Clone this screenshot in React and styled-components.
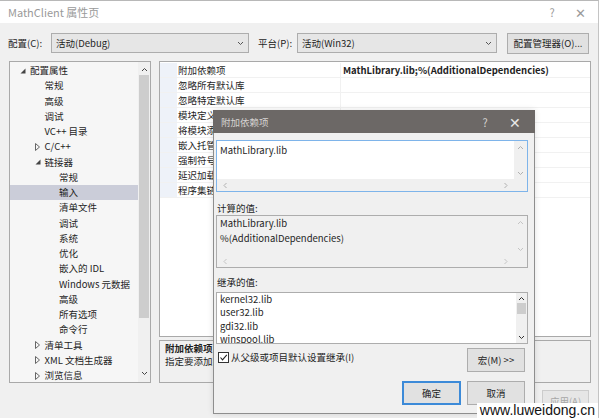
import React from 'react'
import styled, { createGlobalStyle } from 'styled-components'

const Global = createGlobalStyle`
  html, body { margin: 0; padding: 0; background: #fff; }
  body {
    font-family: "Segoe UI", "Noto Sans CJK SC", sans-serif;
    font-size: 9.5px;
    color: #1e1e1e;
  }
  * { box-sizing: border-box; }
`

const Window = styled.div`
  position: relative;
  width: 599px;
  height: 418px;
  overflow: hidden;
  background: #f0f0f0;
  border-top: 1px solid #b8b8b8;
  border-right: 1px solid #c4c4c4;
  display: flex;
  flex-direction: column;
`

const TitleBar = styled.div`
  height: 22px;
  background: #fff;
  display: flex;
  align-items: center;
  padding-left: 8px;
  color: #9a9a9a;
  font-size: 11px;
`

const TitleText = styled.div`
  flex: 1;
`

const TitleCtl = styled.div`
  width: ${p => p.w}px;
  text-align: center;
  color: ${p => p.color || '#9a9a9a'};
  font-size: ${p => p.size || 11}px;
`

const ConfigRow = styled.div`
  display: flex;
  align-items: center;
  padding: 9px 0 0 8px;
  height: 31px;
`

const Label = styled.div`
  width: ${p => p.w}px;
  flex: none;
`

const Combo = styled.div`
  width: ${p => p.w}px;
  height: 20px;
  flex: none;
  background: #e6e6e6;
  border: 1px solid #adadad;
  display: flex;
  align-items: center;
  justify-content: space-between;
  padding: 0 4px 0 4px;
`

const Button = styled.div`
  width: ${p => p.w}px;
  height: ${p => p.h || 21}px;
  flex: none;
  display: flex;
  align-items: center;
  justify-content: center;
  background: ${p => (p.disabled ? '#e6e6e6' : '#e1e1e1')};
  border: ${p => (p.primary ? '2px solid #3c8ad8' : p.disabled ? '1px solid #cccccc' : '1px solid #adadad')};
  color: ${p => (p.disabled ? '#a6a6a6' : '#1e1e1e')};
  margin-left: ${p => p.ml || 0}px;
`

const Body = styled.div`
  display: flex;
  gap: 8px;
  padding-left: 9px;
  margin-top: 7px;
  height: 322px;
`

const Tree = styled.div`
  width: 142px;
  border: 1px solid #a9a9a9;
  background: #f6f6f6;
  display: flex;
  position: relative;
`

const TreeList = styled.div`
  flex: 1;
  padding-top: 1px;
`

const TreeItem = styled.div`
  height: 15.25px;
  line-height: 15.25px;
  display: flex;
  align-items: center;
  padding-left: ${p => p.indent}px;
  background: ${p => (p.selected ? '#cbcdd9' : 'transparent')};
  white-space: nowrap;
`

const Twist = styled.span`
  width: 10px;
  flex: none;
  display: flex;
  align-items: center;
`

const VScroll = styled.div`
  width: ${p => p.w || 12}px;
  flex: none;
  background: ${p => p.bg || '#f0f0f0'};
  display: flex;
  flex-direction: column;
  align-items: center;
  justify-content: space-between;
  padding: ${p => p.pad || '4px 0'};
`

const Thumb = styled.div`
  width: ${p => p.w}px;
  height: ${p => p.h}px;
  background: #cdcdcd;
  margin-top: ${p => p.mt || 0}px;
`

const ScrollCol = styled.div`
  display: flex;
  flex-direction: column;
  align-items: center;
  flex: 1;
`

const RightCol = styled.div`
  width: 432px;
  display: flex;
  flex-direction: column;
  gap: 3px;
`

const Grid = styled.div`
  height: 276px;
  border: 1px solid #a9a9a9;
  background: #fff;
  padding-top: 1px;
`

const GridRow = styled.div`
  height: 15px;
  display: flex;
  align-items: center;
  border-bottom: 1px solid #f1f1f1;
`

const GridStrip = styled.div`
  width: 17px;
  height: 100%;
  background: #eef2f9;
  flex: none;
`

const GridName = styled.div`
  width: 164px;
  padding-left: 1px;
  flex: none;
  white-space: nowrap;
  overflow: hidden;
  height: 100%;
  display: flex;
  align-items: center;
  border-right: 1px solid #f1f1f1;
`

const GridValue = styled.div`
  padding-left: 2px;
  font-weight: 700;
  white-space: nowrap;
`

const Desc = styled.div`
  height: 43px;
  border: 1px solid #a9a9a9;
  background: #f0f0f0;
  padding: 1px 5px;
  line-height: 13px;
`

const DescTitle = styled.div`
  font-weight: 700;
`

const BottomRow = styled.div`
  display: flex;
  justify-content: flex-end;
  gap: 10px;
  padding-right: 9px;
  margin-top: 7px;
`

/* dialog */
const Dialog = styled.div`
  position: absolute;
  left: 213px;
  top: 109px;
  width: 322px;
  height: 304px;
  background: #f0f0f0;
  border: 1px solid #8e8e8e;
  border-top: none;
  display: flex;
  flex-direction: column;
  box-shadow: 0 0 6px rgba(0, 0, 0, 0.12);
`

const DlgTitle = styled.div`
  height: 23px;
  background: #6c6866;
  color: #d6d4d2;
  display: flex;
  align-items: center;
  padding-left: 8px;
  margin: 0 -1px;
`

const DlgBody = styled.div`
  padding: 7px 6px 0 2px;
  display: flex;
  flex-direction: column;
`

const Box = styled.div`
  height: ${p => p.h}px;
  border: 1px solid ${p => p.border || '#adadad'};
  background: ${p => p.bg || '#fff'};
  display: flex;
  flex-direction: column;
`

const BoxMain = styled.div`
  flex: 1;
  display: flex;
  min-height: 0;
`

const BoxText = styled.div`
  flex: 1;
  padding: ${p => p.pad || '1px 3px'};
  line-height: ${p => p.lh || 15}px;
  overflow: hidden;
  white-space: nowrap;
`

const HScroll = styled.div`
  height: 12px;
  display: flex;
`

const HTrack = styled.div`
  flex: 1;
  background: ${p => p.bg || '#f0f0f0'};
  display: flex;
  align-items: center;
  justify-content: space-between;
  padding: 0 5px;
`

const Corner = styled.div`
  width: 13px;
  background: ${p => p.bg || '#f0f0f0'};
`

const FieldLabel = styled.div`
  height: ${p => p.h}px;
  display: flex;
  align-items: center;
  padding-left: 1px;
`

const CheckRow = styled.div`
  display: flex;
  justify-content: space-between;
  margin-top: 4px;
  height: 24px;
  padding-right: 3px;
`

const CheckLabel = styled.label`
  display: flex;
  align-items: center;
  gap: 2px;
  height: 18px;
  padding-left: 2px;
`

const CheckBox = styled.span`
  width: 11px;
  height: 11px;
  border: 1px solid #333;
  background: #fff;
  display: flex;
  align-items: center;
  justify-content: center;
`

const DlgButtons = styled.div`
  display: flex;
  justify-content: flex-end;
  gap: 6px;
  margin-top: 9px;
  padding-right: 3px;
`

const Watermark = styled.div`
  position: absolute;
  right: 0;
  bottom: 0;
  background: #fff;
  color: #111;
  font-family: "Liberation Sans", Arial, sans-serif;
  font-size: 14px;
  line-height: 15px;
  padding: 0 3px 0 3px;
`

const Chevron = ({ dir = 'down', color = '#555', size = 7 }) => {
  const pts = {
    down: '1,2 3.5,4.5 6,2',
    up: '1,5 3.5,2.5 6,5',
    left: '4.5,1 2,3.5 4.5,6',
    right: '2.5,1 5,3.5 2.5,6',
  }[dir]
  return (
    <svg width={size} height={size} viewBox="0 0 7 7">
      <polyline points={pts} fill="none" stroke={color} strokeWidth="1" />
    </svg>
  )
}

const Expanded = () => (
  <svg width="6" height="6" viewBox="0 0 6 6">
    <polygon points="5.5,0.5 5.5,5.5 0.5,5.5" fill="#444" />
  </svg>
)

const Collapsed = () => (
  <svg width="6" height="8" viewBox="0 0 6 8">
    <polygon points="0.5,0.5 4.5,4 0.5,7.5" fill="none" stroke="#666" strokeWidth="1" />
  </svg>
)

const treeItems = [
  { t: '配置属性', l: 1, tw: 'open' },
  { t: '常规', l: 2 },
  { t: '高级', l: 2 },
  { t: '调试', l: 2 },
  { t: 'VC++ 目录', l: 2 },
  { t: 'C/C++', l: 2, tw: 'closed' },
  { t: '链接器', l: 2, tw: 'open' },
  { t: '常规', l: 3 },
  { t: '输入', l: 3, sel: true },
  { t: '清单文件', l: 3 },
  { t: '调试', l: 3 },
  { t: '系统', l: 3 },
  { t: '优化', l: 3 },
  { t: '嵌入的 IDL', l: 3 },
  { t: 'Windows 元数据', l: 3 },
  { t: '高级', l: 3 },
  { t: '所有选项', l: 3 },
  { t: '命令行', l: 3 },
  { t: '清单工具', l: 2, tw: 'closed' },
  { t: 'XML 文档生成器', l: 2, tw: 'closed' },
  { t: '浏览信息', l: 2, tw: 'closed' },
]

const gridRows = [
  ['附加依赖项', 'MathLibrary.lib;%(AdditionalDependencies)'],
  ['忽略所有默认库', ''],
  ['忽略特定默认库', ''],
  ['模块定义文件', ''],
  ['将模块添加到程序集', ''],
  ['嵌入托管资源文件', ''],
  ['强制符号引用', ''],
  ['延迟加载的 DLL', ''],
  ['程序集链接资源', ''],
]

function App() {
  return (
    <>
      <Global />
      <Window>
        <TitleBar>
          <TitleText>MathClient 属性页</TitleText>
          <TitleCtl w={20}>?</TitleCtl>
          <TitleCtl w={36} size={13}>✕</TitleCtl>
        </TitleBar>

        <ConfigRow>
          <Label w={43}>配置(C):</Label>
          <Combo w={198}>
            <span>活动(Debug)</span>
            <Chevron />
          </Combo>
          <Label w={48} style={{ paddingLeft: 9 }}>平台(P):</Label>
          <Combo w={200}>
            <span>活动(Win32)</span>
            <Chevron />
          </Combo>
          <Button w={82} ml={10}>配置管理器(O)...</Button>
        </ConfigRow>

        <Body>
          <Tree>
            <TreeList>
              {treeItems.map((it, i) => {
                const textLeft = 20 + (it.l - 1) * 14.5
                return (
                  <TreeItem key={i} indent={textLeft - 10} selected={it.sel}>
                    <Twist>
                      {it.tw === 'open' && <Expanded />}
                      {it.tw === 'closed' && <Collapsed />}
                    </Twist>
                    {it.t}
                  </TreeItem>
                )
              })}
            </TreeList>
            <VScroll w={12} pad="4px 0 5px">
              <ScrollCol>
                <Chevron dir="up" color="#444" />
                <Thumb w={10} h={243} mt={2} />
              </ScrollCol>
              <Chevron dir="down" color="#444" />
            </VScroll>
          </Tree>

          <RightCol>
            <Grid>
              {gridRows.map(([n, v], i) => (
                <GridRow key={i}>
                  <GridStrip />
                  <GridName>{n}</GridName>
                  <GridValue>{v}</GridValue>
                </GridRow>
              ))}
            </Grid>
            <Desc>
              <DescTitle>附加依赖项</DescTitle>
              <div>指定要添加到链接命令行的附加项。[例如 kernel32.lib]</div>
            </Desc>
          </RightCol>
        </Body>

        <BottomRow>
          <Button w={47} h={22}>确定</Button>
          <Button w={47} h={22}>取消</Button>
          <Button w={47} h={22} disabled>应用(A)</Button>
        </BottomRow>

        <Dialog>
          <DlgTitle>
            <TitleText>附加依赖项</TitleText>
            <TitleCtl w={20} color="#d6d4d2">?</TitleCtl>
            <TitleCtl w={40} color="#e8e8e8" size={14}>✕</TitleCtl>
          </DlgTitle>
          <DlgBody>
            <Box h={52} border="#7eb4ea">
              <BoxMain>
                <BoxText pad="2px 3px">MathLibrary.lib</BoxText>
                <VScroll w={13} pad="3px 0 2px">
                  <Chevron dir="up" color="#b0b0b0" />
                  <Chevron dir="down" color="#b0b0b0" />
                </VScroll>
              </BoxMain>
              <HScroll>
                <HTrack>
                  <Chevron dir="left" color="#b0b0b0" />
                  <Chevron dir="right" color="#b0b0b0" />
                </HTrack>
                <Corner />
              </HScroll>
            </Box>

            <FieldLabel h={23} style={{ paddingTop: 8 }}>计算的值:</FieldLabel>
            <Box h={53} bg="#f0f0f0">
              <BoxMain>
                <BoxText pad="0 3px">
                  MathLibrary.lib
                  <br />
                  %(AdditionalDependencies)
                </BoxText>
                <VScroll w={13} bg="#f0f0f0" pad="3px 0 2px">
                  <Chevron dir="up" color="#c4c4c4" />
                  <Chevron dir="down" color="#c4c4c4" />
                </VScroll>
              </BoxMain>
              <HScroll>
                <HTrack>
                  <Chevron dir="left" color="#c4c4c4" />
                  <Chevron dir="right" color="#c4c4c4" />
                </HTrack>
                <Corner />
              </HScroll>
            </Box>

            <FieldLabel h={24} style={{ paddingTop: 4 }}>继承的值:</FieldLabel>
            <Box h={52}>
              <BoxMain>
                <BoxText pad="0 3px" lh={13.4}>
                  kernel32.lib
                  <br />
                  user32.lib
                  <br />
                  gdi32.lib
                  <br />
                  winspool.lib
                  <br />
                  comdlg32.lib
                </BoxText>
                <VScroll w={11} pad="2px 0 2px">
                  <ScrollCol>
                    <Chevron dir="up" color="#333" />
                    <Thumb w={9} h={11} mt={1} />
                  </ScrollCol>
                  <Chevron dir="down" color="#333" />
                </VScroll>
              </BoxMain>
            </Box>

            <CheckRow>
              <CheckLabel>
                <CheckBox>
                  <svg width="9" height="9" viewBox="0 0 9 9">
                    <polyline points="1.5,4.5 3.5,6.8 7.8,1.8" fill="none" stroke="#222" strokeWidth="1.1" />
                  </svg>
                </CheckBox>
                从父级或项目默认设置继承(I)
              </CheckLabel>
              <Button w={58} h={24}>宏(M) &gt;&gt;</Button>
            </CheckRow>

            <DlgButtons>
              <Button w={59} h={24} primary>确定</Button>
              <Button w={58} h={24}>取消</Button>
            </DlgButtons>
          </DlgBody>
        </Dialog>

        <Watermark>www.luweidong.cn</Watermark>
      </Window>
    </>
  )
}

export default App
